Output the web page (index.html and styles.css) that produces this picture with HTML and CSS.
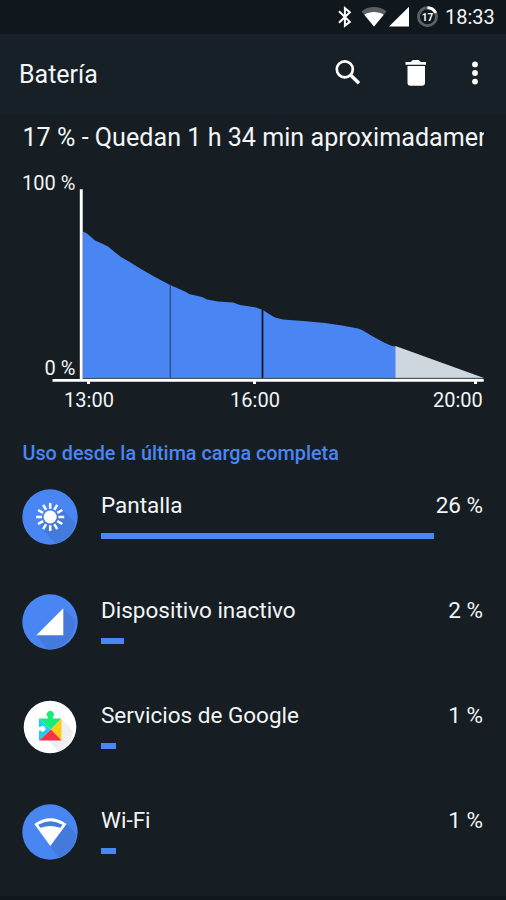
FILE: index.html
```html
<!DOCTYPE html>
<html lang="es">
<head>
<meta charset="utf-8">
<title>Batería</title>
<link rel="stylesheet" href="styles.css">
</head>
<body>
<div class="screen">
  <div class="statusbar">
    <svg class="status-icons" width="116" height="34" viewBox="326 0 116 34">
      <path d="M339 11.300L349.800 21.800L344.900 25.600V8.200L349.800 12.200L339 22.700" fill="none" stroke="#fff" stroke-width="2"/>
      <path d="M361.500 11.400C368.500 5.700 379.500 5.700 386.500 11.400L374 26.500z" fill="#596066"/>
      <path d="M364.300 14.800C369.500 11 378.500 11 383.700 14.800L374 26.500z" fill="#fff"/>
      <path d="M389 26.500L409 6.700V26.500z" fill="#fff"/>
      <circle cx="427.500" cy="16.700" r="9" fill="none" stroke="#596066" stroke-width="3"/>
      <path d="M427.500 7.700a9 9 0 0 1 8.200 5.200" fill="none" stroke="#fff" stroke-width="3"/>
      <text x="427.500" y="20.500" class="gauge">17</text>
    </svg>
    <span class="clock">18:33</span>
  </div>
  <div class="appbar">
    <h1 class="title">Batería</h1>
    <svg class="actions" width="176" height="81" viewBox="330 34 176 81">
      <circle cx="344.800" cy="69.300" r="8" fill="none" stroke="#fff" stroke-width="2.700"/>
      <path d="M350.500 75L359 83.300" stroke="#fff" stroke-width="3.500"/>
      <path d="M405.500 62h5.300l2-2h6l2 2h5.200v2.700h-20.500zM407.500 66h17.500v16.800q0 3-3 3h-11.500q-3 0-3-3z" fill="#fff"/>
      <g fill="#fff"><circle cx="475" cy="64.400" r="2.900"/><circle cx="475" cy="73" r="2.900"/><circle cx="475" cy="81.600" r="2.900"/></g>
    </svg>
  </div>
  <main class="content">
    <p class="summary">17 % - Quedan 1 h 34 min aproximadamente</p>
    <svg class="chart" width="484" height="260" viewBox="22 160 484 260">
      <path fill="#4a86f3" d="M83 378V231.500L87 233.500L91 237L95 240.500L102 243.500L108 246.500L114 251.500L121 257L128 261L141 269L154 276.500L169 284.500L186 292L189 294L202 297L207 299.500L218 301.500L233 302.500L240 305L250 306.500L256 307.500L263 310L269 314L275 317.500L283 319.500L303 321L325 323L342 325.500L358 328.500L362 330L372 336L384 342.500L392 346L396 346.500V378z"/>
      <path fill="#ced7dd" d="M395.500 378V346L484 378z"/>
      <path d="M170.300 284.500V378" stroke="#2c4a79" stroke-width="1.200"/>
      <path d="M262.500 309V378" stroke="#101923" stroke-width="1.800"/>
      <path d="M83 378.300H483" stroke="#53606b" stroke-width="1"/>
      <path fill="#fff" d="M79.800 189.300h2.900V379H483.700v2.800H477v2.200h-3v-2.200H256v2.200h-3v-2.200H90v2.200h-3v-2.200H52.500V379H79.800z"/>
      <text x="75.300" y="189.500" class="axis end">100 %</text>
      <text x="75.300" y="375.200" class="axis end">0 %</text>
      <text x="89" y="407" class="axis mid">13:00</text>
      <text x="255" y="407" class="axis mid">16:00</text>
      <text x="482.800" y="407" class="axis end">20:00</text>
    </svg>
    <h2 class="section">Uso desde la última carga completa</h2>
    <ul class="list">
      <li class="row">
        <svg class="icon" viewBox="0 0 56 56">
          <circle cx="28" cy="28" r="27.700" fill="#4a86f3"/>
          <path d="M38 18L53.500 34A27.700 27.700 0 0 1 34 54.800L18.500 38z" fill="#437adb"/>
          <circle cx="28.200" cy="28" r="6.500" fill="#fff"/>
          <g stroke="#fff" stroke-width="2.500"><path id="ray" d="M28.200 14v5.800M28.200 36.200V42"/><use href="#ray" transform="rotate(30 28.200 28)"/><use href="#ray" transform="rotate(60 28.200 28)"/><use href="#ray" transform="rotate(90 28.200 28)"/><use href="#ray" transform="rotate(120 28.200 28)"/><use href="#ray" transform="rotate(150 28.200 28)"/></g>
        </svg>
        <div class="info"><div class="line"><span>Pantalla</span><span>26 %</span></div><div class="bar" style="width:333px"></div></div>
      </li>
      <li class="row">
        <svg class="icon" viewBox="0 0 56 56">
          <circle cx="28" cy="28" r="27.700" fill="#4a86f3"/>
          <path d="M41 14L53 26A27.700 27.700 0 0 1 25.500 55.500L14.500 41.500z" fill="#437adb"/>
          <path d="M14.300 41.300L41.300 14.300V41.300z" fill="#fff"/>
        </svg>
        <div class="info"><div class="line"><span>Dispositivo inactivo</span><span>2 %</span></div><div class="bar" style="width:23px"></div></div>
      </li>
      <li class="row">
        <svg class="icon" viewBox="0 0 56 56">
          <circle cx="28" cy="28" r="26.300" fill="#fff"/>
          <path d="M39.500 20L51 32A26.300 26.300 0 0 1 36.500 52.600L26 41z" fill="#eeeff0"/>
          <path d="M17 19.500V41.500L29 30.500z" fill="#17cffb"/>
          <path d="M17 19.500h22.500L29 30.500z" fill="#16ed77"/>
          <path d="M39.500 19.500v22l-10.500-11z" fill="#fecb18"/>
          <path d="M17 41.500h22.500l-10.500-11z" fill="#f63448"/>
          <path d="M25.800 20V18a3.500 3.500 0 1 1 5 0v2z" fill="#16ed77"/>
          <path d="M17 28h1.500a2.800 2.800 0 1 1 0 3.600H17z" fill="#fff"/>
        </svg>
        <div class="info"><div class="line"><span>Servicios de Google</span><span>1 %</span></div><div class="bar" style="width:15px"></div></div>
      </li>
      <li class="row">
        <svg class="icon" viewBox="0 0 56 56">
          <circle cx="28" cy="28" r="27.700" fill="#4a86f3"/>
          <path d="M44.500 20L54.500 30A27.700 27.700 0 0 1 37 54L28 42z" fill="#437adb"/>
          <path d="M12.300 20Q28.300 8.500 44.500 20L28.300 42z" fill="#fff"/>
          <path d="M16.200 20.800Q28.300 13.800 40.500 20.800L38.300 23.800Q28.300 20 18.400 23.800z" fill="#447bdc"/>
        </svg>
        <div class="info"><div class="line"><span>Wi-Fi</span><span>1 %</span></div><div class="bar" style="width:15px"></div></div>
      </li>
    </ul>
  </main>
</div>
</body>
</html>
```
FILE: styles.css
```css
* { box-sizing: border-box; margin: 0; padding: 0; }
body { background: #161e24; color: #f3f5f6; font-family: Roboto, sans-serif; overflow: hidden; }
.screen { width: 506px; height: 900px; display: flex; flex-direction: column; overflow: hidden; border-bottom: 4px solid #10171d; }
.statusbar { flex: none; height: 34px; background: #10171d; display: flex; justify-content: flex-end; padding-right: 11px; }
.status-icons { display: block; margin-right: 3px; }
.clock { font-size: 20px; line-height: 35px; width: 50px; white-space: nowrap; }
.gauge { font: 700 10px Roboto, sans-serif; fill: #fff; text-anchor: middle; }
.appbar { flex: none; height: 81px; background: #172026; display: flex; justify-content: space-between; padding-left: 19px; }
.title { font-size: 25px; font-weight: 400; line-height: 82px; }
.content { flex: 1; min-height: 0; padding-left: 22px; background: #161e24; }
.summary { width: 462px; height: 45px; overflow: hidden; white-space: nowrap; font-size: 25.1px; letter-spacing: 0.02px; line-height: 45px; padding-left: 0.5px; }
.chart { display: block; }
.axis { font: 400 20px Roboto, sans-serif; fill: #f3f5f6; }
.end { text-anchor: end; }
.mid { text-anchor: middle; }
.section { font-size: 19.8px; font-weight: 500; line-height: 24px; margin-top: 22px; padding-left: 0.5px; color: #4a86f3; }
.list { list-style: none; padding-top: 23px; }
.row { display: flex; height: 105px; gap: 23px; }
.icon { flex: none; width: 56px; height: 56px; }
.info { width: 382px; padding-top: 2px; }
.line { display: flex; justify-content: space-between; font-size: 22.5px; line-height: 28px; }
.bar { height: 6px; margin-top: 14px; background: #4a86f3; }
```
